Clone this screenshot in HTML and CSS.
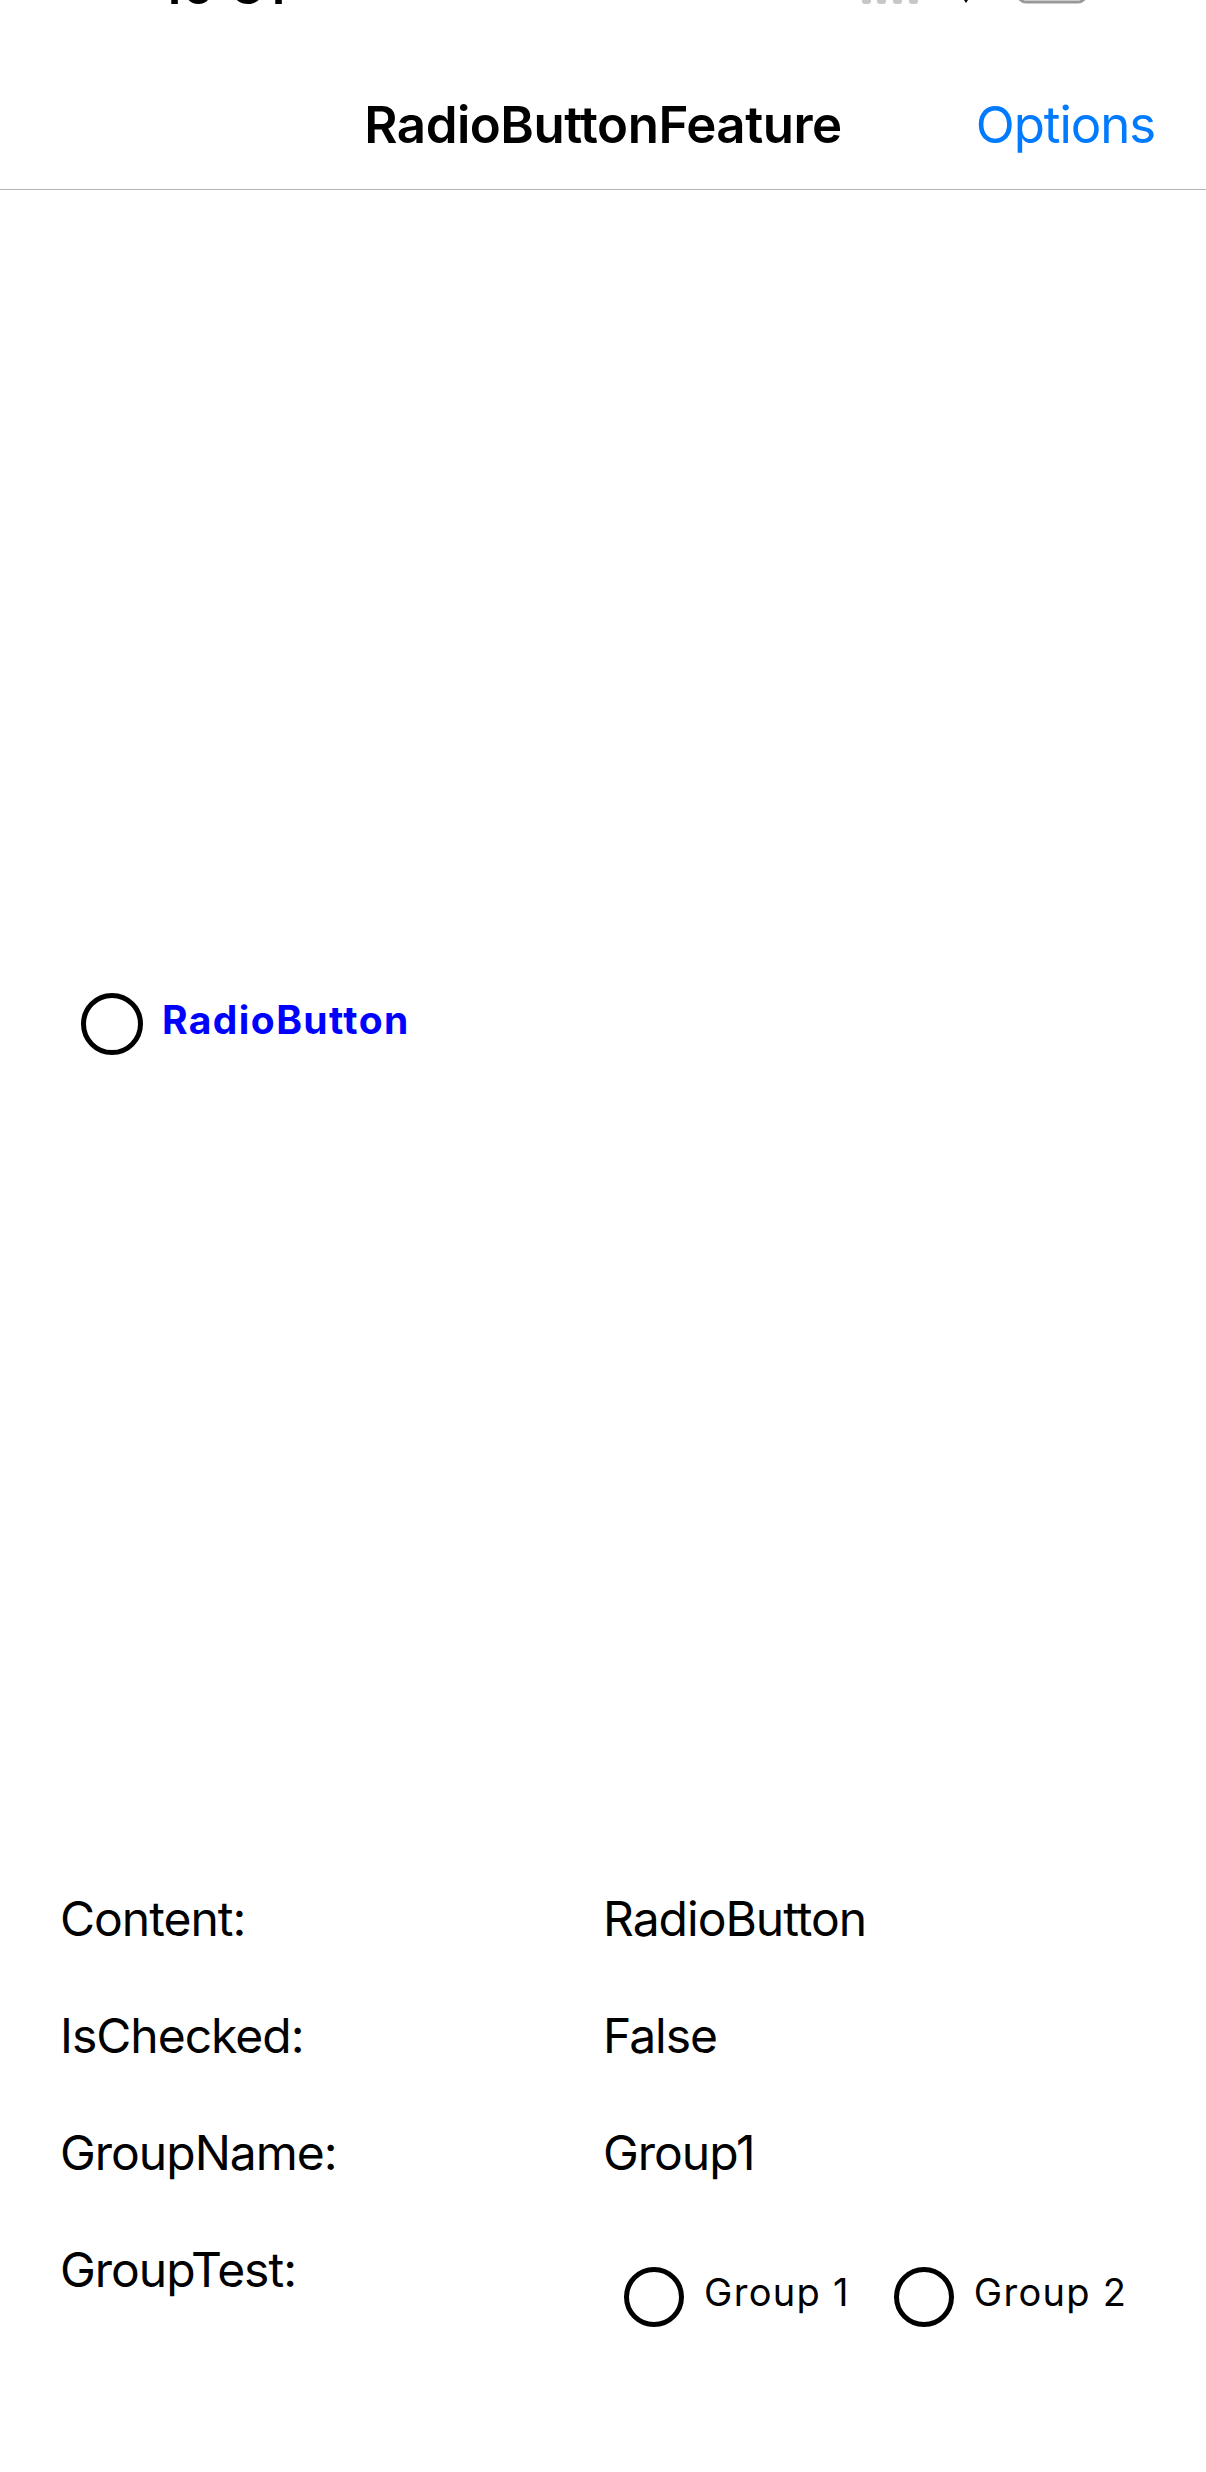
FILE: index.html
```html
<!DOCTYPE html>
<html lang="en">
<head>
<meta charset="utf-8">
<title>RadioButtonFeature</title>
<link rel="stylesheet" href="styles.css">
</head>
<body>
<div class="status-bar">
  <span class="time">10:31</span>
  <svg class="status-icons" width="240" height="12" viewBox="0 0 240 12">
    <rect x="0" y="-10" width="9" height="14" rx="3" fill="#c7c7c7"/>
    <rect x="15" y="-10" width="9" height="14" rx="3" fill="#c7c7c7"/>
    <rect x="31" y="-10" width="9" height="14" rx="3" fill="#c7c7c7"/>
    <rect x="47" y="-10" width="9" height="14" rx="3" fill="#c7c7c7"/>
    <path d="M98 -6 L110 -6 L104 3 Z" fill="#000"/>
    <rect x="156" y="-20" width="68" height="22" rx="8" fill="none" stroke="#999" stroke-width="3"/>
  </svg>
</div>
<header class="navbar">
  <div class="nav-side"></div>
  <div class="nav-title">RadioButtonFeature</div>
  <div class="nav-side nav-right"><span class="nav-action">Options</span></div>
</header>
<main class="stage">
  <div class="radio radio-main">
    <span class="radio-circle"></span>
    <span class="radio-label radio-label-main">RadioButton</span>
  </div>
</main>
<section class="props">
  <div class="prop-name">Content:</div>
  <div class="prop-value">RadioButton</div>
  <div class="prop-name">IsChecked:</div>
  <div class="prop-value">False</div>
  <div class="prop-name">GroupName:</div>
  <div class="prop-value">Group1</div>
  <div class="prop-name">GroupTest:</div>
  <div class="prop-value group-test">
    <div class="radio radio-small">
      <span class="radio-circle"></span>
      <span class="radio-label">Group 1</span>
    </div>
    <div class="radio radio-small">
      <span class="radio-circle"></span>
      <span class="radio-label">Group 2</span>
    </div>
  </div>
</section>
</body>
</html>
```
FILE: styles.css
```css
html, body {
  margin: 0;
  padding: 0;
  background: #ffffff;
}
body {
  width: 1206px;
  height: 2472px;
  overflow: hidden;
  font-family: Inter, "Noto Sans", "Liberation Sans", sans-serif;
  color: #000;
}
.status-bar {
  height: 6px;
  overflow: hidden;
  display: flex;
  align-items: flex-end;
  justify-content: space-between;
}
.time {
  font-size: 51px;
  font-weight: 600;
  line-height: 1;
  margin-left: 160px;
  margin-bottom: -5px;
}
.status-icons {
  align-self: flex-start;
  margin-right: 104px;
}
.navbar {
  display: grid;
  grid-template-columns: 1fr auto 1fr;
  align-items: end;
  padding: 93px 51px 39px 51px;
  border-bottom: 1px solid #b4b4b4;
}
.nav-title {
  font-size: 51px;
  font-weight: 600;
  line-height: 1;
  letter-spacing: -0.5px;
}
.nav-right {
  display: flex;
  justify-content: flex-end;
}
.nav-action {
  font-size: 51px;
  line-height: 1;
  color: #007aff;
  letter-spacing: -1.1px;
}
.stage {
  height: 1705px;
  box-sizing: border-box;
  padding: 803px 0 0 81px;
}
.radio {
  display: flex;
  align-items: center;
}
.radio-circle {
  box-sizing: border-box;
  width: 62px;
  height: 62px;
  border: 5px solid #000;
  border-radius: 50%;
  flex: none;
}
.radio-label {
  font-size: 38px;
  line-height: 1;
  padding-bottom: 10px;
  letter-spacing: 1.3px;
}
.radio-main .radio-label {
  margin-left: 19px;
}
.radio-label-main {
  color: #0000ff;
  font-weight: 700;
  font-size: 39px;
  letter-spacing: 1.4px;
}
.props {
  display: grid;
  grid-template-columns: 1fr 1fr;
  row-gap: 69px;
  padding: 0 60px;
}
.prop-name, .prop-value {
  font-size: 48px;
  line-height: 1;
  letter-spacing: -1px;
}
.group-test {
  display: flex;
  gap: 44px;
  padding-top: 21px;
  padding-left: 21px;
}
.radio-small .radio-circle {
  width: 60px;
  height: 60px;
}
.radio-small .radio-label {
  margin-left: 20px;
}
```
